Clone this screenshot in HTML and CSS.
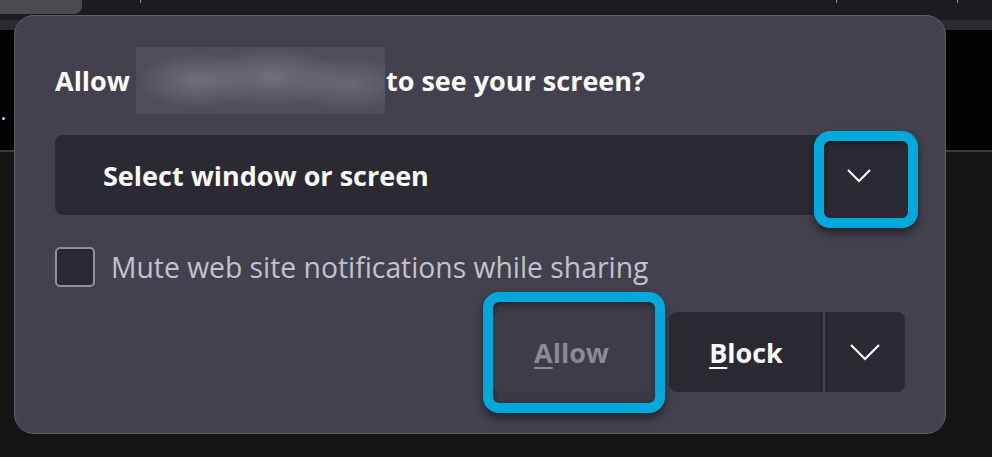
FILE: index.html
```html
<!DOCTYPE html>
<html lang="en">
<head>
    <meta charset="UTF-8">
    <meta name="viewport" content="width=device-width, initial-scale=1.0">
    <title>Share screen</title>
    <link rel="stylesheet" href="styles.css">
</head>
<body>
    <!-- browser chrome behind the popup -->
    <div class="topbar">
        <div class="tab"></div>
        <span class="tick tick-1"></span>
        <span class="tick tick-2"></span>
        <span class="tick tick-3"></span>
    </div>
    <div class="toolbar"></div>
    <div class="content">
        <span class="dot"></span>
    </div>

    <div class="panel">
        <div class="title">
            <span>Allow</span>
            <span class="blurred"></span>
            <span>to see your screen?</span>
        </div>

        <div class="select">
            <span class="select-label">Select window or screen</span>
            <span class="ring ring-select"></span>
            <svg class="chevron" width="26" height="15" viewBox="0 0 26 15">
                <polyline points="2,2 13,13 24,2" fill="none" stroke="#fbfbfe" stroke-width="2"/>
            </svg>
        </div>

        <label class="check-row">
            <span class="checkbox"></span>
            <span class="check-label">Mute web site notifications while sharing</span>
        </label>

        <div class="buttons">
            <div class="allow-wrap">
                <span class="ring ring-allow"></span>
                <button class="btn btn-allow" disabled><u>A</u>llow</button>
            </div>
            <div class="split">
                <button class="btn btn-block"><u>B</u>lock</button>
                <button class="btn btn-menu">
                    <svg width="32" height="18" viewBox="0 0 32 18">
                        <polyline points="2,2 16,16 30,2" fill="none" stroke="#fbfbfe" stroke-width="2.2"/>
                    </svg>
                </button>
            </div>
        </div>
    </div>
</body>
</html>
```

FILE: styles.css
```css
html, body {
    margin: 0;
    padding: 0;
}

body {
    width: 992px;
    height: 457px;
    overflow: hidden;
    position: relative;
    background-color: #141414;
    font-family: "Open Sans", "Noto Sans", sans-serif;
}

/* Browser chrome behind */
.topbar {
    height: 20px;
    background-color: #1c1b22;
    display: flex;
    align-items: flex-start;
}

.tab {
    width: 82px;
    height: 14px;
    background-color: #4b4a50;
    border-radius: 0 0 8px 0;
}

.tick {
    width: 1px;
    height: 3px;
    background-color: #8f8f9d;
}
.tick-1 { margin-left: 58px; }
.tick-2 { margin-left: 695px; }
.tick-3 { margin-left: 120px; }

.toolbar {
    height: 10px;
    background-color: #2b2a33;
}

.content {
    height: 120px;
    background-color: #000;
    border-bottom: 2px solid #3a3a3e;
    position: relative;
}

.dot {
    position: absolute;
    left: 2px;
    top: 87px;
    width: 3px;
    height: 3px;
    border-radius: 50%;
    background-color: #c9cdd6;
}

/* Popup panel */
.panel {
    position: absolute;
    left: 14px;
    top: 15px;
    width: 932px;
    height: 419px;
    box-sizing: border-box;
    padding: 44px 40px 0 40px;
    background-color: #42414d;
    border: 1px solid #5e5d69;
    border-radius: 20px;
    color: #fbfbfe;
}

.title {
    height: 40px;
    display: flex;
    align-items: center;
    font-size: 27px;
    font-weight: 700;
    white-space: nowrap;
}

.blurred {
    width: 249px;
    height: 67px;
    margin: 0 1px 0 6px;
    background:
        radial-gradient(ellipse 60px 28px at 25% 50%, rgba(120, 119, 130, 0.8), rgba(120, 119, 130, 0) 100%),
        radial-gradient(ellipse 70px 30px at 55% 45%, rgba(118, 117, 128, 0.85), rgba(118, 117, 128, 0) 100%),
        radial-gradient(ellipse 60px 28px at 85% 55%, rgba(112, 111, 122, 0.8), rgba(112, 111, 122, 0) 100%),
        #4f4e5a;
}

/* Select */
.select {
    position: relative;
    margin-top: 35px;
    margin-right: -3px;
    height: 80px;
    box-sizing: border-box;
    padding: 0 36px 0 48px;
    display: flex;
    align-items: center;
    justify-content: space-between;
    background-color: #2b2a33;
    border-radius: 8px;
}

.select-label {
    font-size: 27px;
    font-weight: 700;
}

.chevron {
    position: relative;
    z-index: 1;
}

/* Highlight rings drawn over the dialog */
.ring {
    position: absolute;
    box-sizing: border-box;
    border: 10px solid #00a8dc;
    border-radius: 16px;
    box-shadow: 0 5px 8px rgba(0, 0, 0, 0.45), inset 1px 2px 5px rgba(0, 0, 0, 0.45);
}

.ring-select {
    right: -10px;
    top: -4px;
    width: 104px;
    height: 97px;
    background-color: #2b2a33;
}

.ring-allow {
    left: -10px;
    top: -20px;
    width: 182px;
    height: 121px;
    background-color: #3a3944;
}

/* Checkbox */
.check-row {
    margin-top: 32px;
    height: 40px;
    display: flex;
    align-items: center;
}

.checkbox {
    width: 40px;
    height: 40px;
    box-sizing: border-box;
    border: 2px solid #8f8f9d;
    border-radius: 5px;
    background-color: #2b2a33;
}

.check-label {
    margin-left: 16px;
    font-size: 28.3px;
    color: #c2c2cc;
}

/* Buttons */
.buttons {
    margin-top: 25px;
    display: flex;
    justify-content: flex-end;
    gap: 19px;
}

.allow-wrap {
    position: relative;
}

.btn {
    height: 80px;
    border: none;
    padding: 0;
    font-family: inherit;
    font-size: 27px;
    font-weight: 700;
    color: #fbfbfe;
    background-color: #2b2a33;
    display: flex;
    align-items: center;
    justify-content: center;
}

.btn u {
    text-decoration-thickness: 2px;
    text-underline-offset: 4px;
}

.btn-allow {
    position: relative;
    z-index: 1;
    width: 157px;
    border-radius: 8px;
    background-color: #3d3c47;
    color: #8a8995;
}

.split {
    display: flex;
    gap: 2px;
}

.btn-block {
    width: 154px;
    border-radius: 8px 0 0 8px;
}

.btn-menu {
    width: 80px;
    border-radius: 0 8px 8px 0;
}
```
